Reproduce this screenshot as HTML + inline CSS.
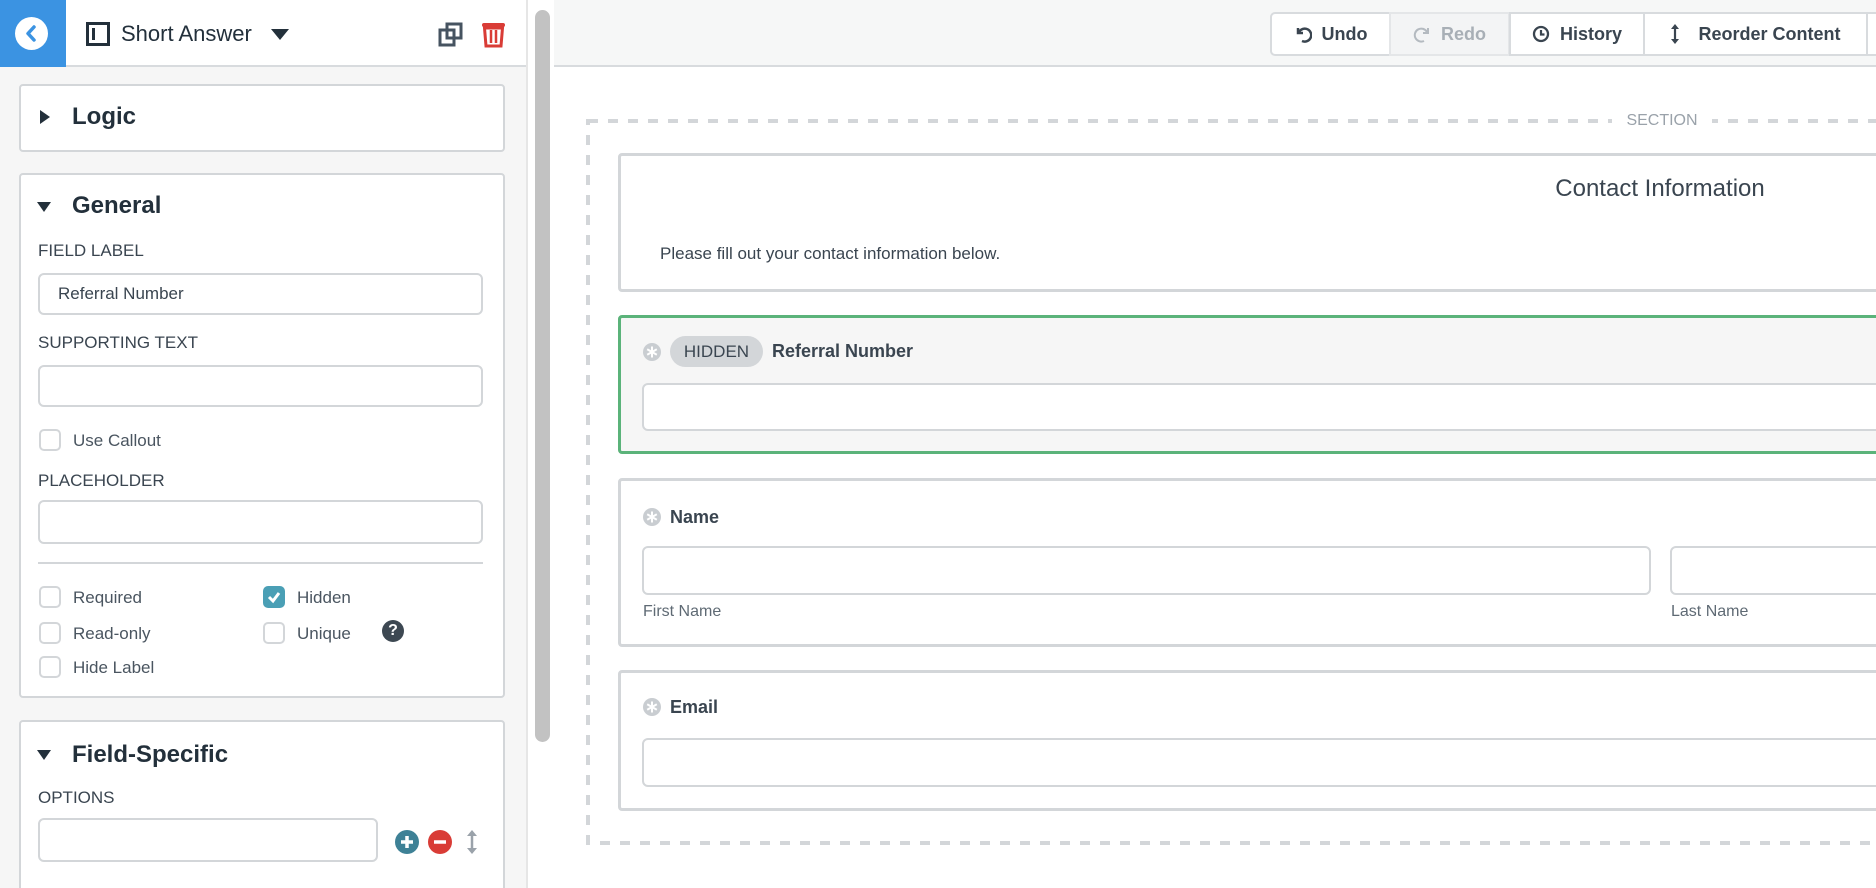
<!DOCTYPE html>
<html style="overflow:hidden"><head><meta charset="utf-8">
<style>
*{box-sizing:border-box;margin:0;padding:0}
html,body{width:1876px;height:888px;overflow:hidden}
body{background:#fff;font-family:"Liberation Sans",Arial,sans-serif;color:#2f3b47;position:relative}
.a{position:absolute}
.card{position:absolute;background:#fff;border:2px solid #d3d6d9;border-radius:4px}
.inp{position:absolute;background:#fff;border:2px solid #d3d6d9;border-radius:6px}
.lbl{position:absolute;font-size:17px;color:#3a4550;line-height:20px}
.cb{position:absolute;width:22px;height:22px;border:2px solid #d3d6d9;border-radius:5px;background:#fff}
.ct{position:absolute;font-size:17px;color:#4a5560;line-height:20px}
.btn{position:absolute;top:12px;height:44px;border:2px solid #d8dbde;background:#fff;font-weight:bold;font-size:18px;color:#3a4550;display:flex;align-items:center;justify-content:center;gap:10px}
.fl{position:absolute;font-weight:bold;font-size:18px;color:#3a4550;line-height:20px}
.h{position:absolute;font-size:24px;color:#23303b;line-height:28px;font-weight:bold}
</style></head><body>
<svg width="0" height="0" style="position:absolute"><defs><g id="ast"><circle cx="9" cy="9" r="9" fill="#c9cdd1"/><path d="M9 3.5V14.5M4.2 6.2L13.8 11.8M13.8 6.2L4.2 11.8" stroke="#fff" stroke-width="2"/></g></defs></svg>
<!-- left panel -->
<div class="a" style="left:0;top:0;width:526px;height:888px;background:#f6f6f6"></div>
<div class="a" style="left:0;top:0;width:526px;height:67px;background:#fff;border-bottom:2px solid #d8dbde"></div>
<div class="a" style="left:0;top:0;width:66px;height:67px;background:#3b93e2"></div>
<div class="a" style="left:15px;top:17px;width:33px;height:33px;border-radius:50%;background:#fff"></div>
<svg class="a" style="left:15px;top:17px" width="33" height="33"><path d="M19 10 L13 16.5 L19 23" stroke="#3b93e2" stroke-width="3.5" fill="none" stroke-linecap="round" stroke-linejoin="round"/></svg>
<svg class="a" style="left:86px;top:22px" width="24" height="24"><rect x="1.5" y="1.5" width="21" height="21" fill="none" stroke="#23303b" stroke-width="3"/><rect x="6" y="6" width="3" height="12" fill="#23303b"/></svg>
<div class="a" style="left:121px;top:21px;font-size:22px;color:#23303b;line-height:26px">Short Answer</div>
<svg class="a" style="left:271px;top:29px" width="18" height="12"><path d="M0 0 H18 L9 11Z" fill="#23303b"/></svg>
<svg class="a" style="left:438px;top:22px" width="25" height="26"><rect x="2" y="8" width="14" height="15" fill="none" stroke="#465360" stroke-width="3"/><rect x="9" y="2" width="14" height="14" fill="none" stroke="#465360" stroke-width="3"/></svg>
<svg class="a" style="left:481px;top:22px" width="25" height="26"><rect x="1" y="1" width="23" height="4" rx="2" fill="#d93c36"/><path d="M3.5 6 H21.5 L20 24 H5Z" fill="none" stroke="#d93c36" stroke-width="3"/><path d="M10 8V21M15 8V21" stroke="#d93c36" stroke-width="2.5"/></svg>
<div class="a" style="left:535px;top:10px;width:15px;height:732px;border-radius:8px;background:#c2c2c2"></div>
<div class="a" style="left:526px;top:0;width:2px;height:888px;background:#e6e6e6"></div>

<div class="card" style="left:19px;top:84px;width:486px;height:68px"></div>
<svg class="a" style="left:40px;top:110px" width="10" height="14"><path d="M0 0 L10 7 L0 14Z" fill="#23303b"/></svg>
<div class="h" style="left:72px;top:103px">Logic</div>

<div class="card" style="left:19px;top:173px;width:486px;height:525px"></div>
<svg class="a" style="left:37px;top:202px" width="14" height="10"><path d="M0 0 H14 L7 10Z" fill="#23303b"/></svg>
<div class="h" style="left:72px;top:192px">General</div>
<div class="lbl" style="left:38px;top:241px">FIELD LABEL</div>
<div class="inp" style="left:38px;top:273px;width:445px;height:42px"></div>
<div class="a" style="left:58px;top:284px;font-size:17px;color:#3a4550">Referral Number</div>
<div class="lbl" style="left:38px;top:333px">SUPPORTING TEXT</div>
<div class="inp" style="left:38px;top:365px;width:445px;height:42px"></div>
<div class="cb" style="left:39px;top:429px"></div><div class="ct" style="left:73px;top:431px">Use Callout</div>
<div class="lbl" style="left:38px;top:471px">PLACEHOLDER</div>
<div class="inp" style="left:38px;top:500px;width:445px;height:44px"></div>
<div class="a" style="left:38px;top:562px;width:445px;height:2px;background:#d3d6d9"></div>
<div class="cb" style="left:39px;top:586px"></div><div class="ct" style="left:73px;top:588px">Required</div>
<div class="cb" style="left:39px;top:622px"></div><div class="ct" style="left:73px;top:624px">Read-only</div>
<div class="cb" style="left:39px;top:656px"></div><div class="ct" style="left:73px;top:658px">Hide Label</div>
<div class="cb" style="left:263px;top:586px;background:#4a9fb5;border-color:#4a9fb5"></div>
<svg class="a" style="left:263px;top:586px" width="22" height="22"><path d="M6 11 L10 15 L16 7" stroke="#fff" stroke-width="3" fill="none"/></svg>
<div class="ct" style="left:297px;top:588px">Hidden</div>
<div class="cb" style="left:263px;top:622px"></div><div class="ct" style="left:297px;top:624px">Unique</div>
<div class="a" style="left:382px;top:620px;width:22px;height:22px;border-radius:50%;background:#3d4852;color:#fff;font-weight:bold;font-size:16px;line-height:22px;text-align:center">?</div>

<div class="card" style="left:19px;top:720px;width:486px;height:180px"></div>
<svg class="a" style="left:37px;top:750px" width="14" height="10"><path d="M0 0 H14 L7 10Z" fill="#23303b"/></svg>
<div class="h" style="left:72px;top:741px">Field-Specific</div>
<div class="lbl" style="left:38px;top:788px">OPTIONS</div>
<div class="inp" style="left:38px;top:818px;width:340px;height:44px"></div>
<svg class="a" style="left:395px;top:830px" width="24" height="24"><circle cx="12" cy="12" r="12" fill="#3e8196"/><path d="M12 6V18M6 12H18" stroke="#fff" stroke-width="3.5"/></svg>
<svg class="a" style="left:428px;top:830px" width="24" height="24"><circle cx="12" cy="12" r="12" fill="#d93c36"/><path d="M6 12H18" stroke="#fff" stroke-width="3.5"/></svg>
<svg class="a" style="left:466px;top:829px" width="12" height="26"><path d="M6 3V23" stroke="#9aa2aa" stroke-width="2.5"/><path d="M1 7L6 1L11 7ZM1 19L6 25L11 19Z" fill="#9aa2aa"/></svg>

<!-- right toolbar -->
<div class="a" style="left:554px;top:0;width:1322px;height:67px;background:#f6f7f7;border-bottom:2px solid #d8dbde"></div>
<div class="btn" style="left:1270px;width:121px;border-radius:5px 0 0 5px"><svg width="18" height="18"><path d="M4 3V8H9" stroke="#3a4550" stroke-width="2.5" fill="none"/><path d="M5 7A6.5 6.5 0 1 1 8 16" stroke="#3a4550" stroke-width="2.5" fill="none"/></svg>Undo</div>
<div class="btn" style="left:1389px;width:121px;background:#f3f4f5;color:#a8afb6;border-color:#e4e6e8"><svg width="18" height="18"><path d="M15 3V8H10" stroke="#b4bac0" stroke-width="2" fill="none"/><path d="M14 7A6.5 6.5 0 1 0 11 16" stroke="#b4bac0" stroke-width="2" fill="none"/></svg>Redo</div>
<div class="btn" style="left:1509px;width:136px"><svg width="18" height="18"><circle cx="9" cy="9" r="7" stroke="#3a4550" stroke-width="2.3" fill="none"/><path d="M9 5V9.5H12.5" stroke="#3a4550" stroke-width="2.2" fill="none"/></svg>History</div>
<div class="btn" style="left:1643px;width:225px;gap:18px"><svg width="10" height="22"><path d="M5 3V19" stroke="#3a4550" stroke-width="2.2"/><path d="M1 6L5 1L9 6ZM1 16L5 21L9 16Z" fill="#3a4550"/></svg>Reorder Content</div>
<div class="btn" style="left:1866px;width:40px"></div>

<!-- section -->
<svg class="a" style="left:584px;top:117px" width="1292" height="730"><rect x="4" y="4" width="1400" height="722" fill="none" stroke="#d3d6d9" stroke-width="4" stroke-dasharray="10 10"/></svg>
<div class="a" style="left:1612px;top:110px;width:100px;height:22px;background:#fff;text-align:center;font-size:16px;color:#9aa2aa;line-height:22px">SECTION</div>

<div class="card" style="left:618px;top:153px;width:1400px;height:139px;border-width:3px"></div>
<div class="a" style="left:1460px;top:175px;width:400px;text-align:center;font-size:24px;color:#3a4550">Contact Information</div>
<div class="a" style="left:660px;top:244px;font-size:17px;color:#3a4550">Please fill out your contact information below.</div>

<div class="card" style="left:618px;top:315px;width:1400px;height:139px;border:3px solid #5bb37a;background:#f6f6f6"></div>
<svg class="a" style="left:643px;top:343px" width="18" height="18"><use href="#ast"/></svg>
<div class="a" style="left:670px;top:336px;width:93px;height:31px;border-radius:16px;background:#d3d6d9;font-size:17px;color:#3a4550;line-height:31px;text-align:center">HIDDEN</div>
<div class="fl" style="left:772px;top:341px">Referral Number</div>
<div class="inp" style="left:642px;top:383px;width:1400px;height:48px"></div>

<div class="card" style="left:618px;top:478px;width:1400px;height:169px;border-width:3px"></div>
<svg class="a" style="left:643px;top:508px" width="18" height="18"><use href="#ast"/></svg>
<div class="fl" style="left:670px;top:507px">Name</div>
<div class="inp" style="left:642px;top:546px;width:1009px;height:49px"></div>
<div class="a" style="left:643px;top:603px;font-size:16px;color:#5f6a74">First Name</div>
<div class="inp" style="left:1670px;top:546px;width:400px;height:49px"></div>
<div class="a" style="left:1671px;top:603px;font-size:16px;color:#5f6a74">Last Name</div>

<div class="card" style="left:618px;top:670px;width:1400px;height:141px;border-width:3px"></div>
<svg class="a" style="left:643px;top:698px" width="18" height="18"><use href="#ast"/></svg>
<div class="fl" style="left:670px;top:697px">Email</div>
<div class="inp" style="left:642px;top:738px;width:1400px;height:49px"></div>
</body></html>
